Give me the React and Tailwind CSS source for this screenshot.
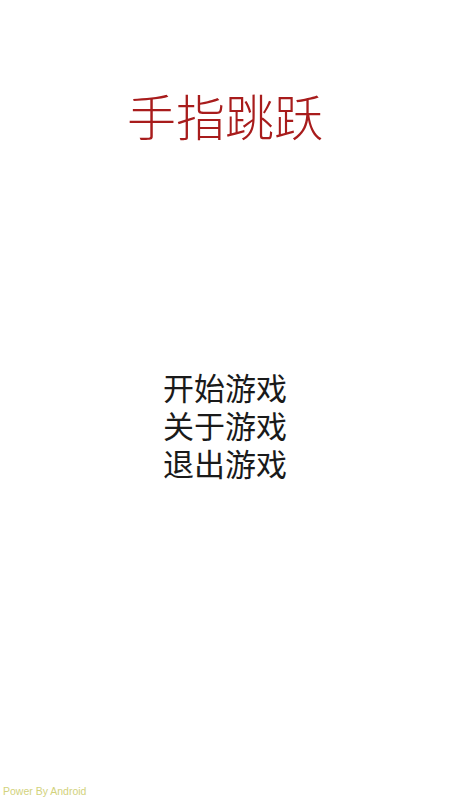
export default function App() {
  const items = ['开始游戏', '关于游戏', '退出游戏'];

  return (
    <div
      className="relative w-[450px] h-[800px] bg-white overflow-hidden flex flex-col items-center"
      style={{ fontFamily: '"Noto Sans CJK SC", "Noto Sans", sans-serif' }}
    >
      {/* Title */}
      <h1 className="mt-[91px] h-[48px] leading-[48px] text-[49px] font-light text-[#a81c1c] tracking-[0px]">
        手指跳跃
      </h1>

      {/* Menu */}
      <div className="mt-[229px] flex flex-col items-center">
        {items.map((item) => (
          <div key={item} className="text-[31px] leading-[38px] text-[#1a1a1a] font-normal">
            {item}
          </div>
        ))}
      </div>

      {/* Footer */}
      <div
        className="absolute left-[3px] bottom-[3px] text-[10.5px] leading-[11px] text-[#d2d27c]"
        style={{ fontFamily: '"Liberation Sans", sans-serif' }}
      >
        Power By Android
      </div>
    </div>
  );
}
